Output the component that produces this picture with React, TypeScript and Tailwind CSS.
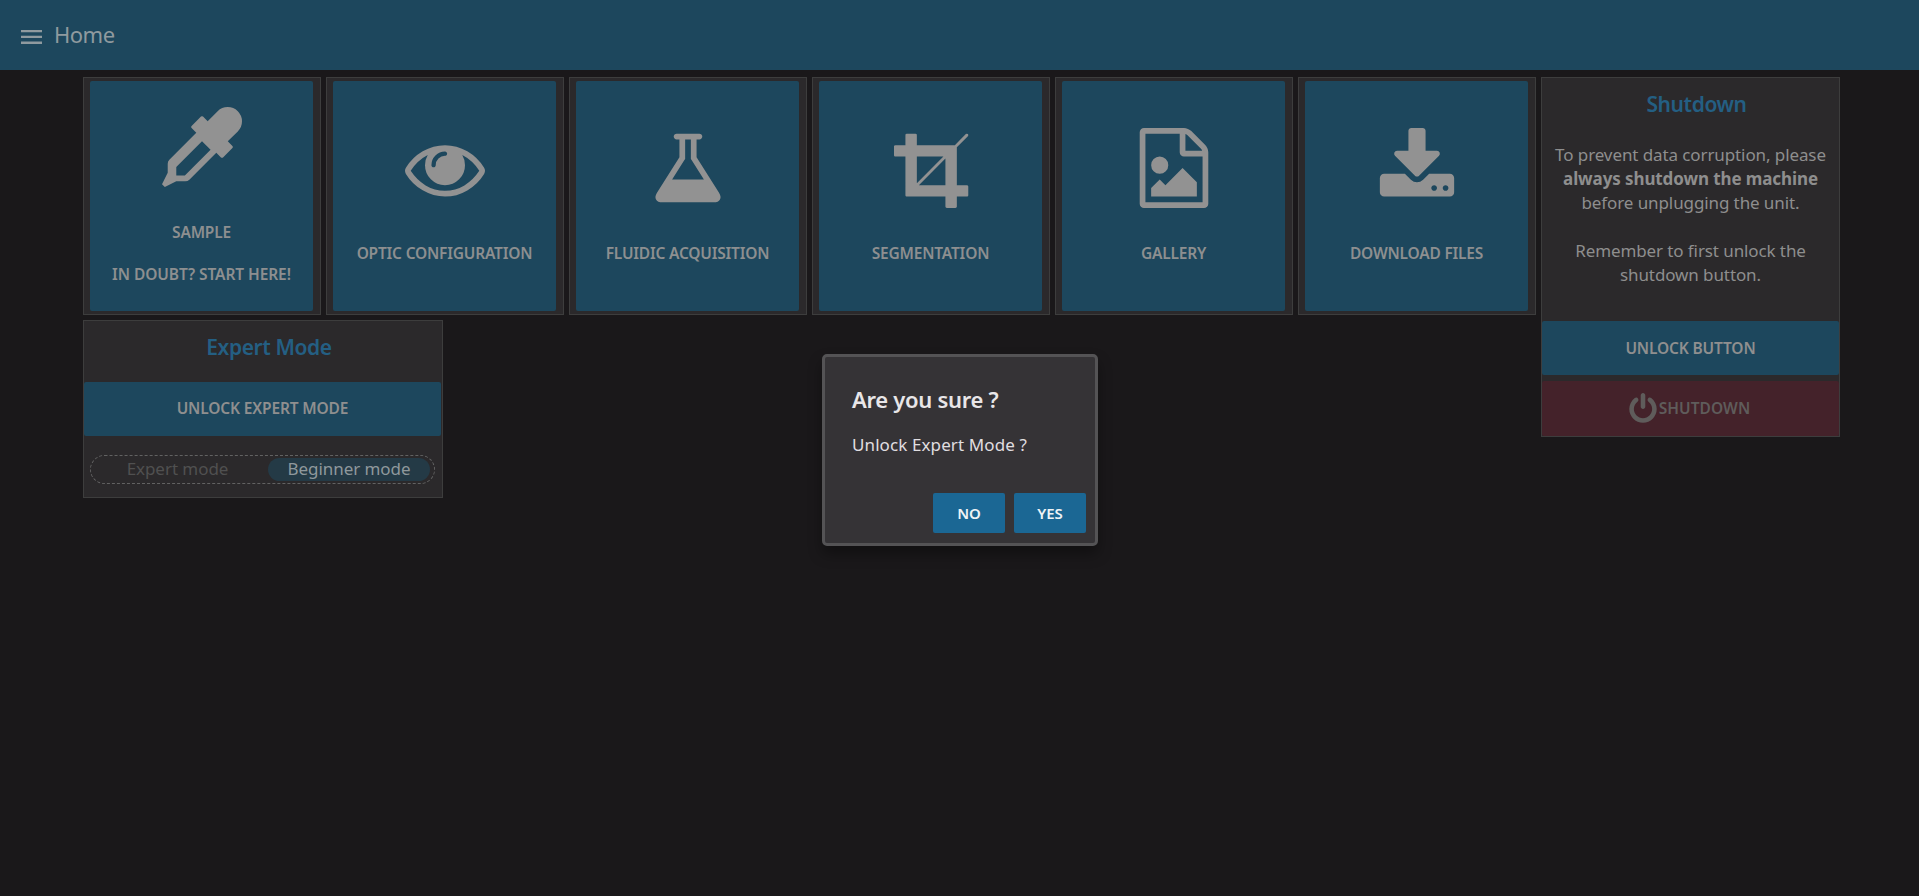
import type { ReactNode } from "react";

const icons = {
  dropper: {
    width: 1792,
    path: "M1698 94q94 94 94 226.5t-94 225.5l-225 223 104 104q10 10 10 23t-10 23l-210 210q-10 10-23 10t-23-10l-105-105-603 603q-37 37-90 37h-203l-256 128-64-64 128-256v-203q0-53 37-90l603-603-105-105q-10-10-10-23t10-23l210-210q10-10 23-10t23 10l104 104 223-225q93-94 225.5-94t226.5 94zm-1186 1442l576-576-192-192-576 576v192h192z",
  },
  eye: {
    width: 1792,
    path: "M1664 960q-152-236-381-353 61 104 61 225 0 185-131.5 316.5t-316.5 131.5-316.5-131.5-131.5-316.5q0-121 61-225-229 117-381 353 133 205 333.5 326.5t434.5 121.5 434.5-121.5 333.5-326.5zm-720-384q0-20-14-34t-34-14q-125 0-214.5 89.5t-89.5 214.5q0 20 14 34t34 14 34-14 14-34q0-86 61-147t147-61q20 0 34-14t14-34zm848 384q0 34-20 69-140 230-376.5 368.5t-499.5 138.5-499.5-139-376.5-368q-20-35-20-69t20-69q140-229 376.5-368t499.5-139 499.5 139 376.5 368q20 35 20 69z",
  },
  flask: {
    width: 1792,
    path: "M1591 1448q56 89 21.5 152.5t-140.5 63.5h-1152q-106 0-140.5-63.5t21.5-152.5l503-793v-399h-64q-26 0-45-19t-19-45 19-45 45-19h512q26 0 45 19t19 45-19 45-45 19h-64v399zm-779-725l-272 429h712l-272-429-20-31v-436h-128v436z",
  },
  crop: {
    width: 1640,
    path: "M557 1280h595v-595zm-45-45l595-595h-595v595zm1152 77v192q0 14-9 23t-23 9h-224v224q0 14-9 23t-23 9h-192q-14 0-23-9t-9-23v-224h-864q-14 0-23-9t-9-23v-864h-224q-14 0-23-9t-9-23v-192q0-14 9-23t23-9h224v-224q0-14 9-23t23-9h192q14 0 23 9t9 23v224h851l246-247q10-9 23-9t23 9q9 10 9 23t-9 23l-247 246v851h224q14 0 23 9t9 23z",
  },
  image: {
    width: 1792,
    path: "M1596 380q28 28 48 76t20 88v1152q0 40-28 68t-68 28h-1344q-40 0-68-28t-28-68v-1600q0-40 28-68t68-28h896q40 0 88 20t76 48zm-444-244v376h376q-10-29-22-41l-313-313q-12-12-41-22zm384 1528v-1024h-416q-40 0-68-28t-28-68v-416h-768v1536h1280zm-128-448v320h-1024v-192l192-192 128 128 384-384zm-832-192q-80 0-136-56t-56-136 56-136 136-56 136 56 56 136-56 136-136 56z",
  },
  download: {
    width: 1792,
    path: "M1344 1344q0-26-19-45t-45-19-45 19-19 45 19 45 45 19 45-19 19-45zm256 0q0-26-19-45t-45-19-45 19-19 45 19 45 45 19 45-19 19-45zm128-224v320q0 40-28 68t-68 28h-1472q-40 0-68-28t-28-68v-320q0-40 28-68t68-28h465l135 136q58 56 136 56t136-56l136-136h464q40 0 68 28t28 68zm-325-569q17 41-14 70l-448 448q-18 19-45 19t-45-19l-448-448q-31-29-14-70 17-39 59-39h256v-448q0-26 19-45t45-19h256q26 0 45 19t19 45v448h256q42 0 59 39z",
  },
  power: {
    width: 1792,
    path: "M1664 896q0 156-61 298t-164 245-245 164-298 61-298-61-245-164-164-245-61-298q0-182 80.5-343t226.5-270q43-32 95.5-25t83.5 50q32 42 24.5 94.5t-49.5 84.5q-98 74-151.5 181t-53.5 228q0 104 40.5 198.5t109.5 163.5 163.5 109.5 198.5 40.5 198.5-40.5 163.5-109.5 109.5-163.5 40.5-198.5q0-121-53.5-228t-151.5-181q-42-32-49.5-84.5t24.5-94.5q31-43 84-50t95 25q146 109 226.5 270t80.5 343zm-640-768v640q0 52-38 90t-90 38-90-38-38-90v-640q0-52 38-90t90-38 90 38 38 90z",
  },
};

function Icon({ name, className }: { name: keyof typeof icons; className: string }) {
  const { width, path } = icons[name];
  return (
    <svg viewBox={`0 0 ${width} 1792`} fill="currentColor" className={`overflow-visible ${className}`} aria-hidden="true">
      <path d={path} />
    </svg>
  );
}

function Panel({ className, children }: { className: string; children: ReactNode }) {
  return <section className={`border border-[#3d3d3d] bg-[#2b292b] ${className}`}>{children}</section>;
}

const tiles: { icon: keyof typeof icons; label: string; note?: string }[] = [
  { icon: "dropper", label: "Sample", note: "In doubt? Start here!" },
  { icon: "eye", label: "Optic configuration" },
  { icon: "flask", label: "Fluidic Acquisition" },
  { icon: "crop", label: "Segmentation" },
  { icon: "image", label: "Gallery" },
  { icon: "download", label: "Download files" },
];

function Tile({ icon, label, note }: (typeof tiles)[number]) {
  return (
    <Panel className="h-[238px] w-[238px] pl-[6px] pt-[3px]">
      <button
        className={`flex h-[230px] w-[223px] flex-col items-center rounded-[2px] bg-[#1d475d] text-[15.5px] font-semibold uppercase leading-[21px] tracking-[-0.2px] text-[#8d8f90] ${note ? "pt-[26px]" : "pt-[47px]"}`}
      >
        <Icon name={icon} className="h-[80px] text-[#929292]" />
        <span className="mt-[35px] whitespace-nowrap">{label}</span>
        {note && <span className="mt-[21px] whitespace-nowrap tracking-[-0.08px]">{note}</span>}
      </button>
    </Panel>
  );
}

export default function App() {
  return (
    <div className="relative h-[896px] w-full overflow-hidden bg-[#1a181a] font-['Noto_Sans','Open_Sans',sans-serif] text-[#8f8f8f]">
      <header className="flex h-[70px] items-center bg-[#1d475d] pl-[21px]">
        <svg viewBox="0 0 21 14" className="mt-[3px] h-[14px] w-[21px]" fill="#8f9a9f" aria-hidden="true">
          <path d="M0 0h21v2.3H0zM0 5.8h21v2.3H0zM0 11.6h21v2.3H0z" />
        </svg>
        <h1 className="-mt-[2px] ml-[12px] text-[22px] leading-[30px] tracking-[-0.5px] text-[#8f9a9f]">Home</h1>
      </header>

      <main className="flex gap-[5px] pl-[83px] pt-[7px]">
        <div className="flex flex-col gap-[5px]">
          <div className="flex gap-[5px]">
            {tiles.map((tile) => (
              <Tile key={tile.label} {...tile} />
            ))}
          </div>
          <Panel className="flex h-[178px] w-[360px] flex-col">
            <h2 className="ml-[12px] mt-[11px] text-center text-[21px] font-semibold leading-[30px] tracking-[-0.4px] text-[#245f83]">
              Expert Mode
            </h2>
            <button className="mt-[20px] h-[54px] w-[357px] rounded-[2px] bg-[#1d475d] text-[15.5px] font-semibold uppercase tracking-[-0.15px]">
              Unlock expert mode
            </button>
            <div className="ml-[6px] mt-[19px] flex h-[29px] w-[345px] items-center rounded-full border border-dashed border-[#626262] px-[4px] text-[17px] leading-[22px] tracking-[-0.05px]">
              <span className="-mt-[2px] w-[165px] text-center text-[#505050]">Expert mode</span>
              <span className="ml-[8px] flex h-[23px] w-[162px] items-center justify-center rounded-full bg-[#243a46] pb-[2px] text-[#8f989c]">
                Beginner mode
              </span>
            </div>
          </Panel>
        </div>

        <Panel className="flex h-[360px] w-[299px] flex-col">
          <h2 className="ml-[12px] mt-[11px] text-center text-[21px] font-semibold leading-[30px] tracking-[-0.4px] text-[#245f83]">
            Shutdown
          </h2>
          <div className="mt-[24px] text-center text-[17px] leading-[24px] tracking-[-0.1px] text-[#8e8e8e]">
            <p>
              To prevent data corruption, please
              <br />
              <strong>always shutdown the machine</strong>
              <br />
              before unplugging the unit.
            </p>
            <p className="mt-[24px]">
              Remember to first unlock the
              <br />
              shutdown button.
            </p>
          </div>
          <button className="mt-[34px] h-[54px] rounded-[2px] bg-[#1d475d] pt-[2px] text-[15.5px] font-semibold uppercase tracking-[-0.15px]">
            Unlock button
          </button>
          <button className="mt-[6px] flex h-[55px] items-center justify-center rounded-[2px] bg-[#44222a] pr-[4px] text-[15.5px] font-semibold uppercase tracking-[0.05px] text-[#5f5c5b]">
            <Icon name="power" className="h-[32px]" />
            Shutdown
          </button>
        </Panel>
      </main>

      <div
        role="dialog"
        className="absolute left-[822px] top-[354px] flex h-[192px] w-[276px] flex-col rounded-[5px] border-[3px] border-[#545355] bg-[#353336] shadow-[0_8px_14px_rgba(0,0,0,0.35)]"
      >
        <h3 className="ml-[27px] mt-[27px] text-[22px] font-semibold leading-[30px] tracking-[-0.3px] text-[#e8e6e8]">
          Are you sure ?
        </h3>
        <p className="ml-[27px] mt-[19px] text-[17px] leading-[24px] tracking-[0.1px] text-[#e0dee0]">
          Unlock Expert Mode ?
        </p>
        <div className="mt-[36px] flex justify-end gap-[9px] pr-[9px] text-[15px] font-semibold tracking-[-0.1px] text-[#eef3f6]">
          <button className="h-[40px] w-[72px] rounded-[2px] bg-[#1b6794]">NO</button>
          <button className="h-[40px] w-[72px] rounded-[2px] bg-[#1b6794]">YES</button>
        </div>
      </div>
    </div>
  );
}
